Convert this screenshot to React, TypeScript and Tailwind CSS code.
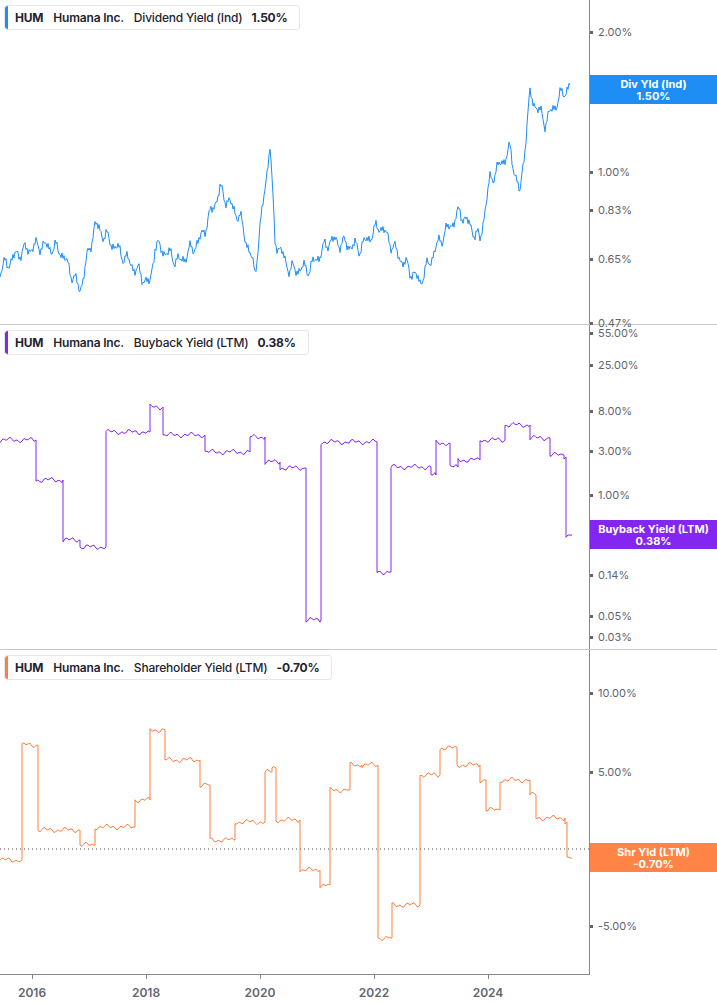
import React from "react";

type Pt = [number, number];

function noisy(pts: Pt[], amp: number, seed: number): string {
  const out: string[] = [];
  for (let i = 0; i < pts.length - 1; i++) {
    const [x0, y0] = pts[i];
    const [x1, y1] = pts[i + 1];
    for (let x = x0; x < x1; x += 1) {
      const t = (x - x0) / (x1 - x0);
      const n =
        Math.sin(x * 2.7 + seed) * amp * 0.5 +
        Math.sin(x * 0.61 + seed * 2) * amp +
        Math.sin(x * 5.3 + seed * 3) * amp * 0.6;
      out.push(`${x},${(y0 + (y1 - y0) * t + n).toFixed(1)}`);
    }
  }
  const last = pts[pts.length - 1];
  out.push(`${last[0]},${last[1]}`);
  return out.join(" ");
}

function steps(pts: Pt[], amp: number, seed: number): string {
  const out: string[] = [];
  for (let i = 0; i < pts.length - 1; i++) {
    const [x0, y0] = pts[i];
    const [x1] = pts[i + 1];
    for (let x = x0; x < x1; x += 2) {
      const n = Math.sin(x * 0.9 + seed) * amp + Math.sin(x * 0.31 + seed) * amp;
      out.push(`${x},${(y0 + n).toFixed(1)}`);
    }
    out.push(`${x1},${y0}`);
  }
  const last = pts[pts.length - 1];
  out.push(`${last[0]},${last[1]}`);
  return out.join(" ");
}

const div: Pt[] = [[0,270],[20,252],[40,245],[60,250],[80,290],[95,225],[120,252],[150,285],[155,245],[180,262],[200,240],[220,190],[240,218],[255,272],[270,145],[275,240],[290,270],[310,268],[330,240],[360,248],[380,225],[400,258],[420,282],[440,240],[460,212],[480,240],[490,180],[510,150],[520,195],[530,95],[545,122],[560,97],[570,85]];
const buy: Pt[] = [[0,115],[36,155],[63,215],[80,222],[106,107],[150,82],[163,110],[205,127],[250,112],[265,137],[280,143],[306,295],[321,117],[377,247],[391,142],[431,150],[436,118],[450,142],[458,135],[480,115],[505,100],[530,113],[550,130],[564,132],[566,210],[572,210]];
const shr: Pt[] = [[0,210],[22,95],[38,180],[80,195],[95,177],[135,150],[150,80],[165,110],[200,135],[210,190],[235,172],[265,122],[272,118],[276,170],[300,220],[320,235],[330,140],[350,115],[362,115],[378,288],[392,255],[420,125],[440,98],[457,115],[480,130],[486,160],[500,130],[530,145],[536,168],[565,172],[567,208],[572,208]];

const tick = "absolute left-0 flex items-center text-[11px] text-[#5f6670]";

function Label({ y, t }: { y: number; t: string }) {
  return (
    <div className={tick} style={{ top: y - 7 }}>
      <span className="mr-[5px] h-[3px] w-[3px] bg-[#666]" />
      {t}
    </div>
  );
}

function Legend({ color, name, value }: { color: string; name: string; value: string }) {
  return (
    <div className="absolute left-[4px] top-[5px] flex h-[25px] items-center rounded-[3px] border border-[#e5e7eb] bg-white pr-[12px] text-[12px] tracking-[-0.2px] text-[#1f2430]">
      <span className="mr-[7px] h-full w-[3px] rounded-l-[3px]" style={{ background: color }} />
      <span className="font-bold">HUM</span>
      <span className="ml-[10px] font-semibold">Humana Inc.</span>
      <span className="ml-[10px] font-medium">{name}</span>
      <span className="ml-[9px] font-bold">{value}</span>
    </div>
  );
}

function Badge({ y, color, a, b }: { y: number; color: string; a: string; b: string }) {
  return (
    <div className="absolute left-0 right-0 flex h-[29px] flex-col items-center justify-center text-[11px] font-bold leading-[12px] text-white" style={{ top: y, background: color }}>
      <span>{a}</span>
      <span>{b}</span>
    </div>
  );
}

function Panel({ children, axis }: { children: React.ReactNode; axis: React.ReactNode }) {
  return (
    <div className="flex h-[325px] border-b border-[#c8c8c8]">
      <div className="relative w-[590px] border-r border-[#888]">{children}</div>
      <div className="relative flex-1 pl-[3px]">{axis}</div>
    </div>
  );
}

export default function App() {
  return (
    <div className="h-[1005px] w-[717px] overflow-hidden bg-white" style={{ fontFamily: "Inter, 'Liberation Sans', sans-serif" }}>
      <Panel
        axis={
          <>
            <Label y={31} t="2.00%" />
            <Label y={171} t="1.00%" />
            <Label y={209} t="0.83%" />
            <Label y={258} t="0.65%" />
            <Label y={322} t="0.47%" />
            <Badge y={75} color="#1e8ef5" a="Div Yld (Ind)" b="1.50%" />
          </>
        }
      >
        <svg className="absolute inset-0" width="590" height="325">
          <polyline points={noisy(div, 5, 1)} fill="none" stroke="#1e8ef5" strokeWidth="1" />
        </svg>
        <Legend color="#1e8ef5" name="Dividend Yield (Ind)" value="1.50%" />
      </Panel>
      <Panel
        axis={
          <>
            <Label y={7} t="55.00%" />
            <Label y={39} t="25.00%" />
            <Label y={85} t="8.00%" />
            <Label y={125} t="3.00%" />
            <Label y={169} t="1.00%" />
            <Label y={249} t="0.14%" />
            <Label y={290} t="0.05%" />
            <Label y={311} t="0.03%" />
            <Badge y={195} color="#8426f2" a="Buyback Yield (LTM)" b="0.38%" />
          </>
        }
      >
        <svg className="absolute inset-0" width="590" height="325">
          <polyline points={steps(buy, 1.5, 2)} fill="none" stroke="#8426f2" strokeWidth="1" />
        </svg>
        <Legend color="#8426f2" name="Buyback Yield (LTM)" value="0.38%" />
      </Panel>
      <div className="relative flex h-[325px]">
        <div className="relative w-[590px] border-r border-b border-[#888]">
          <svg className="absolute inset-0" width="590" height="325">
            <line x1="0" y1="199" x2="590" y2="199" stroke="#444" strokeDasharray="1 3" />
            <polyline points={steps(shr, 1.5, 3)} fill="none" stroke="#ff7f3f" strokeWidth="1" />
          </svg>
          <Legend color="#ff7f3f" name="Shareholder Yield (LTM)" value="-0.70%" />
        </div>
        <div className="relative flex-1 pl-[3px]">
          <Label y={42} t="10.00%" />
          <Label y={121} t="5.00%" />
          <Label y={199} t="0.00%" />
          <Label y={275} t="-5.00%" />
          <Badge y={193} color="#ff8445" a="Shr Yld (LTM)" b="-0.70%" />
        </div>
      </div>
      <div className="relative h-[30px] w-[590px] text-[12px] font-semibold text-[#5f6670]">
        {[["2016", 32], ["2018", 146], ["2020", 260], ["2022", 374], ["2024", 488]].map(([t, x]) => (
          <div key={t} className="absolute top-0 flex flex-col items-center" style={{ left: (x as number) - 16, width: 32 }}>
            <span className="h-[4px] w-px bg-[#888]" />
            <span className="mt-[5px]">{t}</span>
          </div>
        ))}
      </div>
    </div>
  );
}
